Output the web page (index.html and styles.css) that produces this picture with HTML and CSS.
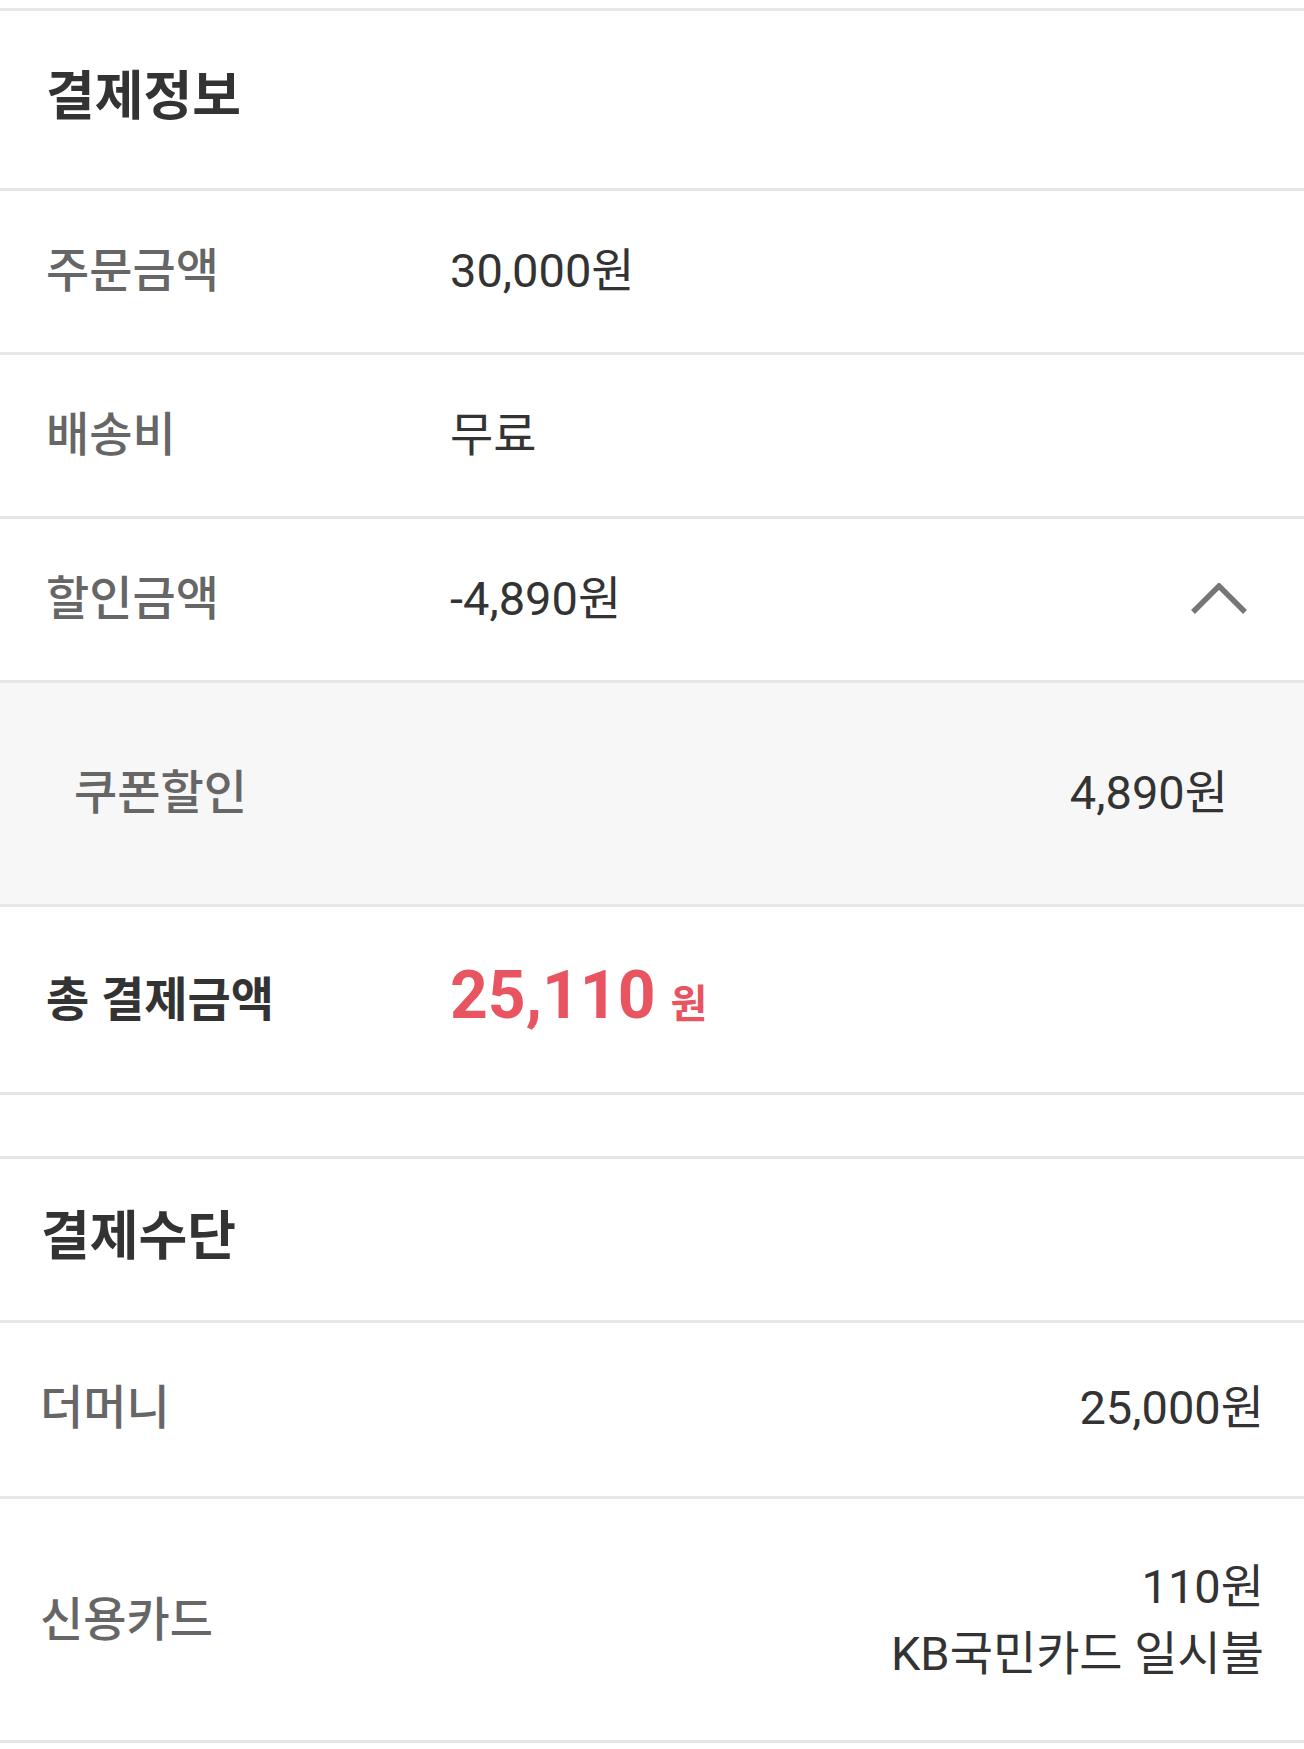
FILE: index.html
```html
<!DOCTYPE html>
<html lang="ko">
<head>
    <meta charset="UTF-8">
    <meta name="viewport" content="width=device-width, initial-scale=1.0">
    <title>결제정보</title>
    <link rel="stylesheet" href="styles.css">
</head>
<body>
    <div class="page">
        <section class="panel info">
            <h2 class="panel-title first">결제정보</h2>
            <div class="row">
                <span class="label">주문금액</span>
                <span class="value">30,000원</span>
            </div>
            <div class="row">
                <span class="label">배송비</span>
                <span class="value">무료</span>
            </div>
            <div class="row">
                <span class="label">할인금액</span>
                <span class="value">-4,890원</span>
                <button class="toggle" type="button" aria-label="접기">
                    <svg width="60" height="34" viewBox="0 0 60 34">
                        <path d="M4 29 L30 3 L56 29" fill="none" stroke="#767676" stroke-width="5.5"/>
                    </svg>
                </button>
            </div>
            <div class="detail">
                <span class="detail-label">쿠폰할인</span>
                <span class="detail-value">4,890원</span>
            </div>
            <div class="row total">
                <span class="label">총 결제금액</span>
                <span class="total-price">25,110<span class="won">원</span></span>
            </div>
        </section>

        <div class="spacer"></div>

        <section class="panel method">
            <h2 class="panel-title">결제수단</h2>
            <div class="row split money">
                <span class="label">더머니</span>
                <span class="value">25,000원</span>
            </div>
            <div class="row split card">
                <span class="label">신용카드</span>
                <span class="value">110원<br>KB국민카드 일시불</span>
            </div>
        </section>
    </div>
</body>
</html>
```

FILE: styles.css
```css
body {
    margin: 0;
    padding: 0;
    background-color: #fff;
    font-family: Roboto, "Noto Sans CJK KR", sans-serif;
    color: #333;
}

.page {
    padding-top: 8px;
}

.panel-title,
.row,
.detail,
.spacer {
    box-sizing: border-box;
    border-top: 3px solid #e6e6e6;
}

.panel-title {
    margin: 0;
    height: 164px;
    display: flex;
    align-items: center;
    padding-left: 41px;
    padding-bottom: 16px;
    font-size: 53px;
    font-weight: bold;
    color: #333;
}

.panel-title.first {
    height: 180px;
    padding-left: 46px;
    padding-bottom: 16px;
}

.row {
    height: 164px;
    display: flex;
    align-items: center;
    padding: 0 42px 10px 46px;
    font-size: 47px;
}

.label {
    width: 404px;
    flex-shrink: 0;
    font-weight: 500;
    color: #666;
}

.value {
    color: #333;
}

.toggle {
    margin-left: auto;
    margin-right: 13px;
    margin-top: 10px;
    padding: 0;
    border: none;
    background: none;
    display: flex;
}

.detail {
    height: 224px;
    display: flex;
    align-items: center;
    justify-content: space-between;
    padding: 0 76px 10px 74px;
    background-color: #f7f7f7;
    font-size: 47px;
}

.detail-label {
    font-weight: 500;
    color: #666;
}

.detail-value {
    color: #333;
}

.total {
    height: 188px;
    padding-bottom: 8px;
}

.total .label {
    font-weight: bold;
    color: #333;
}

.total-price {
    font-size: 66px;
    font-weight: bold;
    color: #e95461;
}

.won {
    margin-left: 15px;
    font-size: 40px;
}

.spacer {
    height: 64px;
}

.method .row {
    padding: 0 40px 12px 40px;
}

.split {
    justify-content: space-between;
}

.split .label {
    width: auto;
}

.split .value {
    text-align: right;
}

.money {
    height: 176px;
}

.method .card {
    height: 247px;
    padding-bottom: 0;
    line-height: 67px;
    border-bottom: 3px solid #e6e6e6;
}
```
